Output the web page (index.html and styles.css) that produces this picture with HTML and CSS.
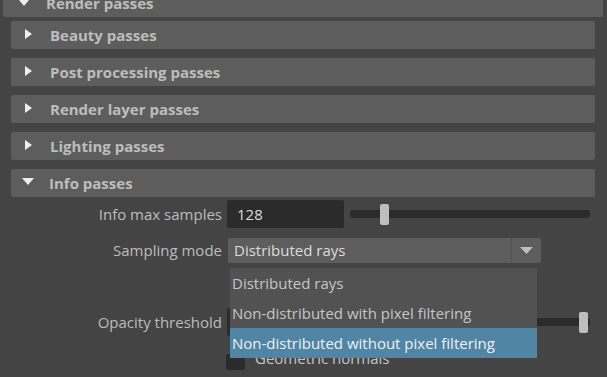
FILE: index.html
```html
<!DOCTYPE html>
<html lang="en">
  <head>
    <meta charset="UTF-8" />
    <title>Render passes</title>
    <link rel="stylesheet" href="styles.css">
  </head>
  <body>
    <div class="frame">
      <div class="frame-header">
        <svg class="arrow-down" width="10" height="6" viewBox="0 0 10 6"><polygon points="0,0 10,0 5,6" fill="#eee"/></svg>
        <span>Render passes</span>
      </div>
      <div class="frame-body">
        <div class="sub-header">
          <svg class="arrow-right" width="7" height="10" viewBox="0 0 7 10"><polygon points="0,0 7,5 0,10" fill="#eee"/></svg>
          <span>Beauty passes</span>
        </div>
        <div class="sub-header">
          <svg class="arrow-right" width="7" height="10" viewBox="0 0 7 10"><polygon points="0,0 7,5 0,10" fill="#eee"/></svg>
          <span>Post processing passes</span>
        </div>
        <div class="sub-header">
          <svg class="arrow-right" width="7" height="10" viewBox="0 0 7 10"><polygon points="0,0 7,5 0,10" fill="#eee"/></svg>
          <span>Render layer passes</span>
        </div>
        <div class="sub-header">
          <svg class="arrow-right" width="7" height="10" viewBox="0 0 7 10"><polygon points="0,0 7,5 0,10" fill="#eee"/></svg>
          <span>Lighting passes</span>
        </div>
        <div class="sub-header open">
          <svg class="arrow-down" width="12" height="7" viewBox="0 0 12 7"><polygon points="0,0 12,0 6,7" fill="#eee"/></svg>
          <span>Info passes</span>
        </div>

        <div class="attrs">
          <div class="row">
            <div class="label">Info max samples</div>
            <div class="ctrl">
              <div class="field">128</div>
              <div class="slider">
                <div class="track"></div>
                <div class="handle" style="left: 30px"></div>
              </div>
            </div>
          </div>

          <div class="row">
            <div class="label">Sampling mode</div>
            <div class="ctrl">
              <div class="combo">
                <div class="combo-text">Distributed rays</div>
                <div class="combo-btn">
                  <svg width="13" height="7" viewBox="0 0 13 7"><polygon points="0,0 13,0 6.5,7" fill="#bdbdbd"/></svg>
                </div>
                <div class="popup">
                  <div class="item">Distributed rays</div>
                  <div class="item">Non-distributed with pixel filtering</div>
                  <div class="item selected">Non-distributed without pixel filtering</div>
                </div>
              </div>
            </div>
          </div>

          <div class="row">
            <div class="label"></div>
            <div class="ctrl"></div>
          </div>

          <div class="row">
            <div class="label">Opacity threshold</div>
            <div class="ctrl">
              <div class="field">1.000</div>
              <div class="slider">
                <div class="track"></div>
                <div class="handle" style="left: 229px"></div>
              </div>
            </div>
          </div>

          <div class="row">
            <div class="label"></div>
            <div class="ctrl">
              <div class="checkbox"></div>
              <div class="check-text">Geometric normals</div>
            </div>
          </div>
        </div>
      </div>
    </div>
  </body>
</html>
```

FILE: styles.css
```css
body {
  margin: 0;
  padding: 0;
  background: #444444;
  font-family: "Open Sans", "Noto Sans", sans-serif;
  color: #bcbcbc;
  overflow: hidden;
  height: 377px;
}

.frame {
  margin: -11px 4px 0 3px;
}

.frame-header {
  height: 28px;
  background: #5d5d5d;
  border-radius: 2px;
  display: flex;
  align-items: center;
  font-weight: bold;
  font-size: 15px;
  color: #bdbdbd;
}

.frame-header .arrow-down {
  margin: 0 17px 0 16px;
}

.frame-body {
  padding: 4px 8px 0 8px;
  display: flex;
  flex-direction: column;
  gap: 9px;
}

.sub-header {
  height: 28px;
  background: #5d5d5d;
  border-radius: 2px;
  display: flex;
  align-items: center;
  font-weight: bold;
  font-size: 15px;
  color: #bdbdbd;
}

.sub-header .arrow-right {
  margin: 0 18px 3px 14px;
}

.sub-header.open .arrow-down {
  margin: 0 15px 3px 11px;
}

.attrs {
  margin-top: -6px;
  display: flex;
  flex-direction: column;
  gap: 8px;
}

.row {
  height: 28px;
  display: flex;
  align-items: center;
  font-size: 15px;
}

.label {
  width: 211px;
  text-align: right;
  padding-right: 5px;
  color: #bcbcbc;
}

.ctrl {
  display: flex;
  align-items: center;
  flex: 1;
  height: 28px;
}

.field {
  width: 107px;
  height: 28px;
  line-height: 28px;
  padding-left: 10px;
  background: #2b2b2b;
  border-radius: 2px;
  color: #dcdcdc;
}

.slider {
  position: relative;
  margin-left: 6px;
  width: 240px;
  height: 28px;
  display: flex;
  align-items: center;
}

.track {
  width: 100%;
  height: 8px;
  background: #2b2b2b;
  border-radius: 3px;
}

.handle {
  position: absolute;
  top: 4px;
  width: 9px;
  height: 21px;
  background: #bebebe;
  border-radius: 2px;
}

.combo {
  position: relative;
  margin-left: 1px;
  width: 313px;
  height: 25px;
  background: #5d5d5d;
  border-radius: 2px;
  display: flex;
  align-items: center;
}

.combo-text {
  flex: 1;
  padding-left: 6px;
  color: #dcdcdc;
}

.combo-btn {
  width: 29px;
  height: 25px;
  border-left: 1px solid #525252;
  display: flex;
  align-items: center;
  justify-content: center;
}

.popup {
  position: absolute;
  left: 2px;
  top: 30px;
  width: 307px;
  background: #525252;
  z-index: 2;
}

.item {
  height: 30px;
  line-height: 30px;
  padding-left: 2px;
  color: #c6c6c6;
  white-space: nowrap;
}

.item.selected {
  background: #5085a6;
  color: #f0f0f0;
}

.checkbox {
  width: 19px;
  height: 16px;
  margin: 8px 0 0 -1px;
  background: #2b2b2b;
  border-radius: 2px;
}

.check-text {
  margin-left: 10px;
  color: #c6c6c6;
}
```
